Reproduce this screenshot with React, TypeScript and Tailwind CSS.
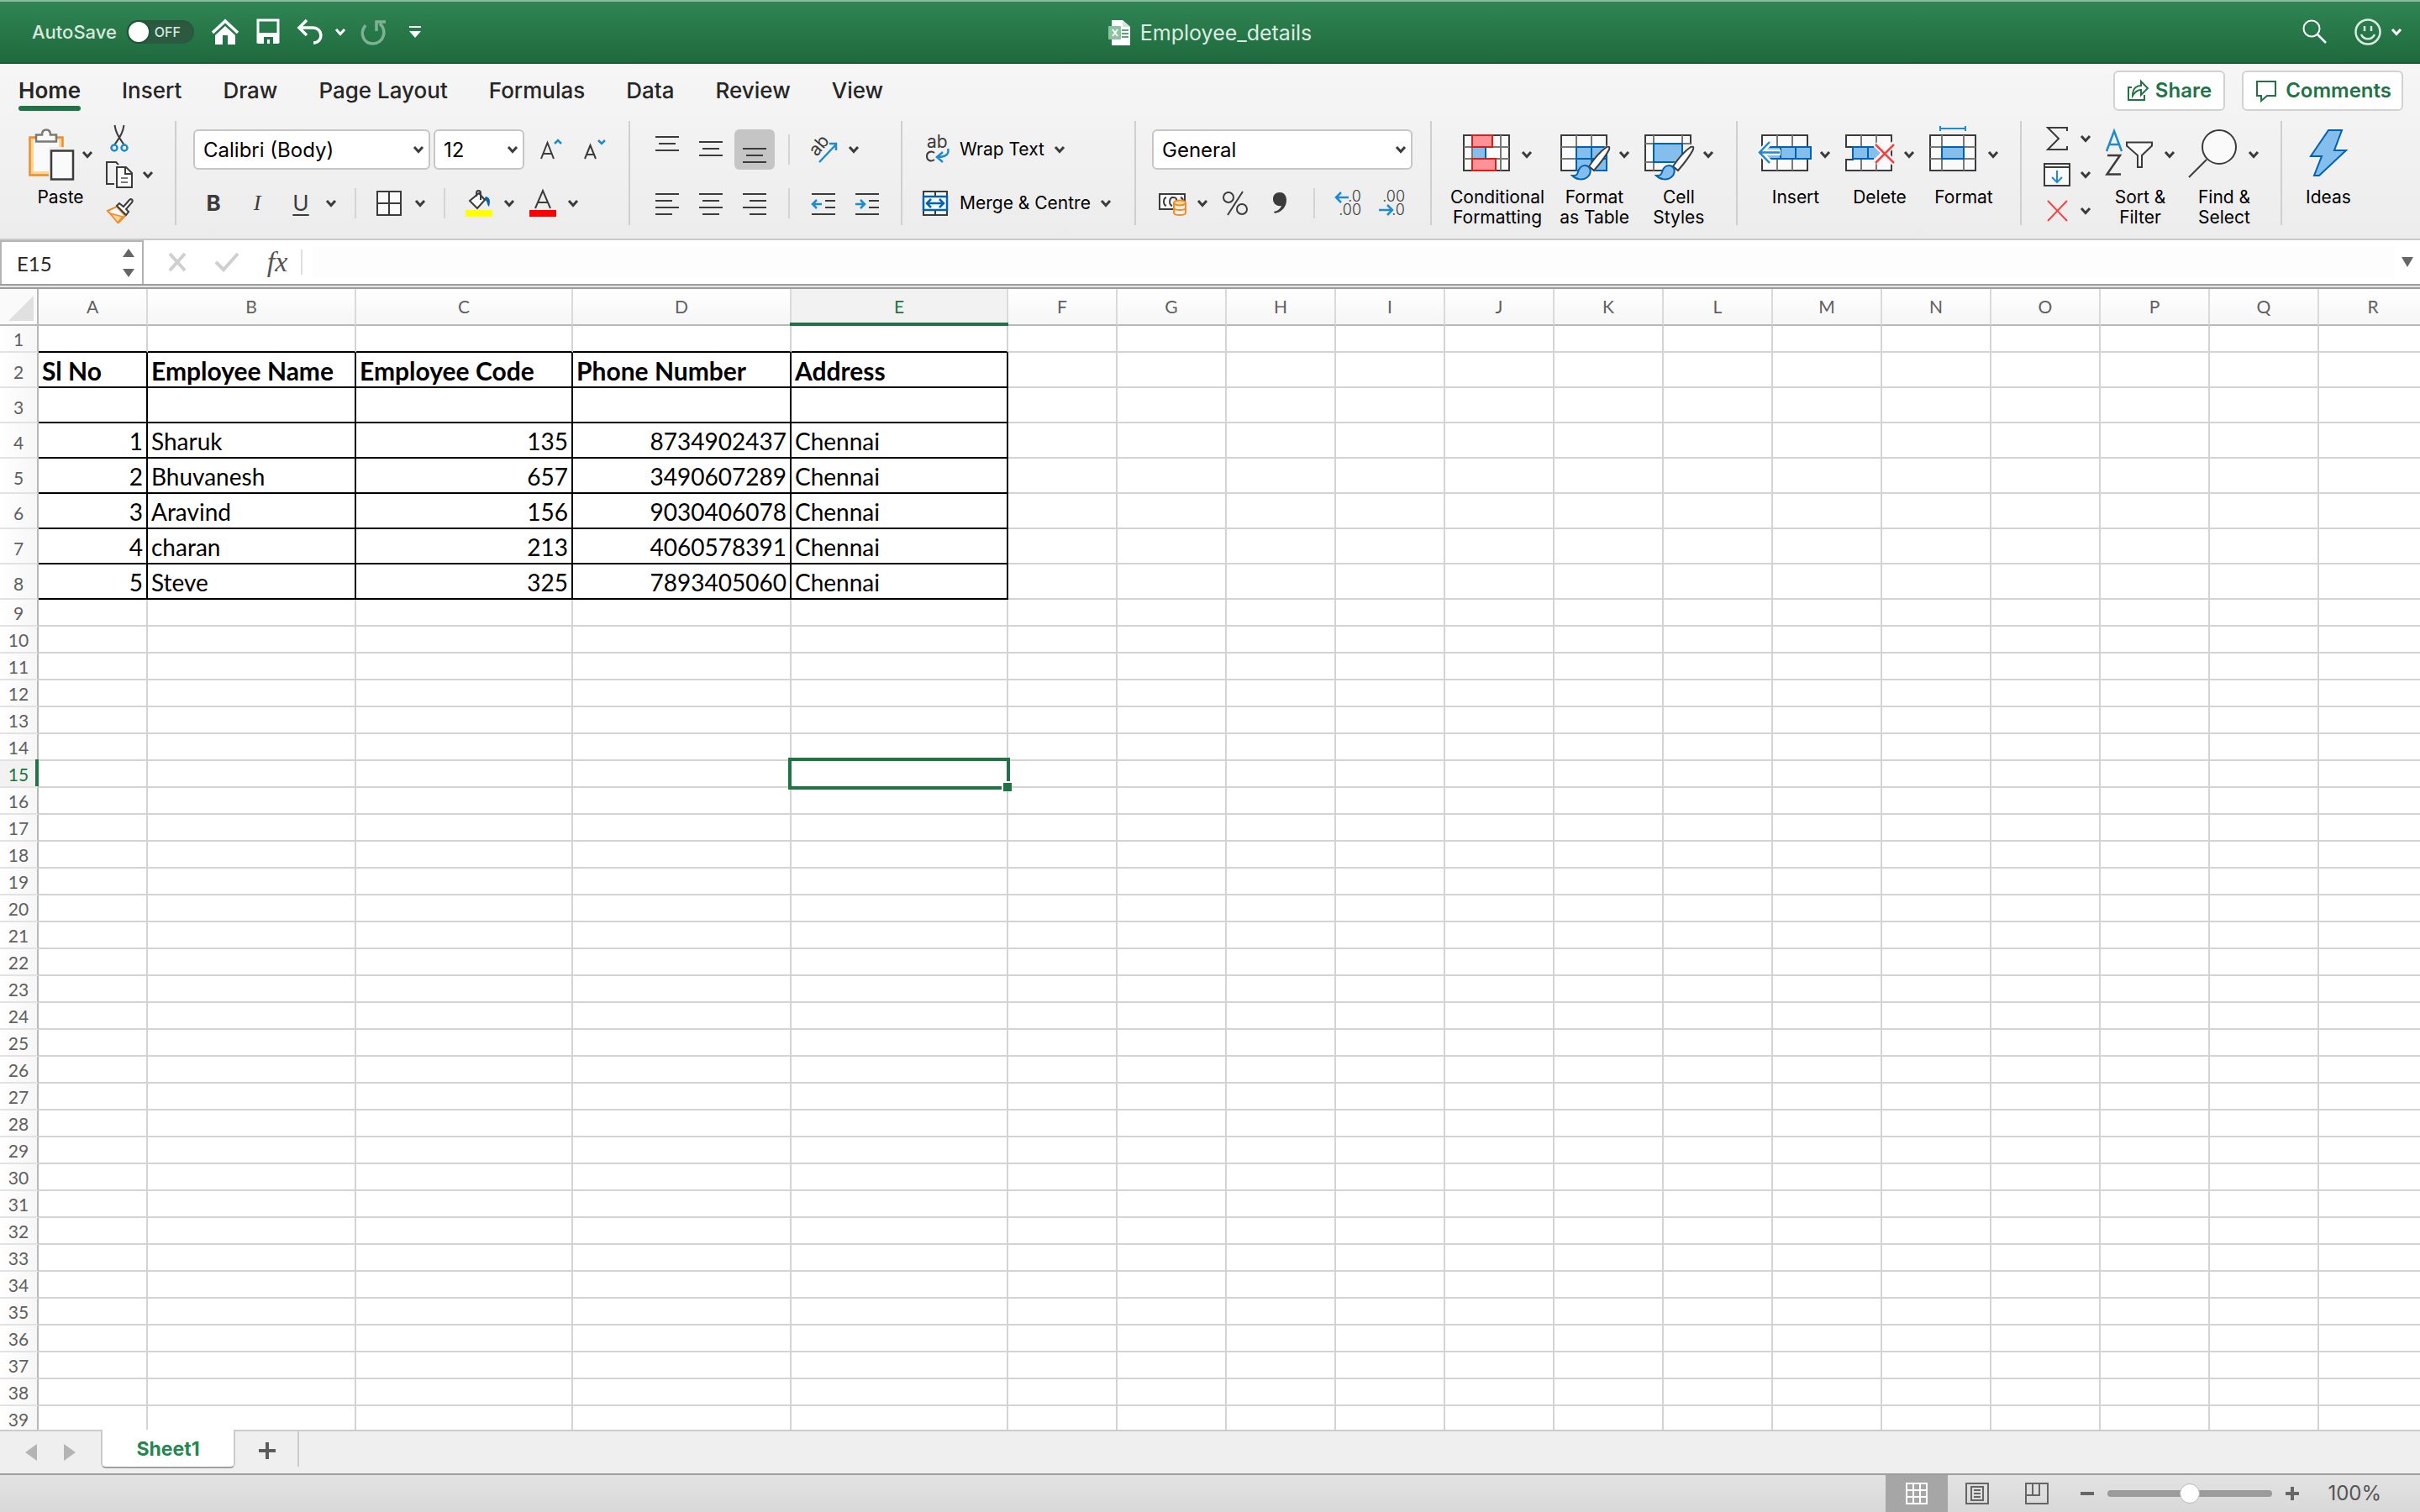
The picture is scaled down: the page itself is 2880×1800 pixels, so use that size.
import React from 'react';
import { clsx } from 'clsx';

const DARK = '#3b3b3b';
const GREY = '#7a7974';
const BLUE = '#1e8bcd';
const DEEP = '#0063b1';
const FILL = '#83beec';

const TABS = ['Home', 'Insert', 'Draw', 'Page Layout', 'Formulas', 'Data', 'Review', 'View'];

const COLUMNS = [
  { name: 'A', width: 130 },
  { name: 'B', width: 248 },
  { name: 'C', width: 258 },
  { name: 'D', width: 260 },
  { name: 'E', width: 258 },
  ...'FGHIJKLMNOPQR'.split('').map(name => ({ name, width: 130 })),
];

const TABLE_WIDTH = COLUMNS.reduce((sum, c) => sum + c.width, 46);

const HEADERS = ['Sl No', 'Employee Name', 'Employee Code', 'Phone Number', 'Address'];

const SHEET: Record<number, (string | number)[]> = {
  2: HEADERS,
  4: [1, 'Sharuk', 135, 8734902437, 'Chennai'],
  5: [2, 'Bhuvanesh', 657, 3490607289, 'Chennai'],
  6: [3, 'Aravind', 156, 9030406078, 'Chennai'],
  7: [4, 'charan', 213, 4060578391, 'Chennai'],
  8: [5, 'Steve', 325, 7893405060, 'Chennai'],
};

const ROWS = Array.from({ length: 39 }, (_, i) => i + 1);

interface IconProps {
  w: number;
  h: number;
  children: React.ReactNode;
}

function Icon({ w, h, children }: IconProps) {
  return (
    <svg width={w} height={h} viewBox={`0 0 ${w} ${h}`} fill="none" className="shrink-0 overflow-visible" aria-hidden="true">
      {children}
    </svg>
  );
}

function Chevron({ color = DARK }: { color?: string }) {
  return (
    <Icon w={12} h={8}>
      <path d="M1 1l5 5.500L11 1" stroke={color} strokeWidth={3} />
    </Icon>
  );
}

function Drop({ label, className }: { label: string; className?: string }) {
  return (
    <button aria-label={label} className={clsx('flex h-9 items-center', className)}>
      <Chevron />
    </button>
  );
}

function Group({ label, className, children }: { label: string; className?: string; children: React.ReactNode }) {
  return (
    <div role="group" aria-label={label} className={clsx('flex h-[124px] shrink-0 border-[#cfcfcf]', className)}>
      {children}
    </div>
  );
}

function Divider({ className }: { className?: string }) {
  return <span className={clsx('h-9 w-0.5 shrink-0 bg-[#d4d4d4]', className)} />;
}

interface BigButtonProps {
  icon: React.ReactNode;
  lines: string[];
  drop?: boolean;
}

function BigButton({ icon, lines, drop = true }: BigButtonProps) {
  return (
    <button className="flex shrink-0 flex-col items-center text-[21px] leading-6 text-black">
      <span className="mb-[9px] flex h-[70px] items-center gap-[10px]">
        {icon}
        {drop && (
          <span className="pt-[10px]">
            <Chevron />
          </span>
        )}
      </span>
      {lines.map(line => (
        <span key={line} className="block whitespace-nowrap">{line}</span>
      ))}
    </button>
  );
}

function PickList({ label, options, className }: { label: string; options: string[]; className?: string }) {
  return (
    <div className={clsx('relative shrink-0', className)}>
      <select
        aria-label={label}
        className="h-12 w-full appearance-none rounded-md border-2 border-[#c6c6c6] bg-white pt-0.5 pl-[10px] text-[24px] leading-8 text-black"
      >
        {options.map(o => <option key={o}>{o}</option>)}
      </select>
      <span className="pointer-events-none absolute top-5 right-2 flex">
        <Chevron />
      </span>
    </div>
  );
}

// Horizontal strokes of the text alignment icons, as [start, end] pairs.
function Lines({ rows, top = 3 }: { rows: [number, number][]; top?: number }) {
  return (
    <Icon w={28} h={28}>
      {rows.map(([a, b], i) => (
        <path key={i} d={`M${a} ${top + i * 8}H${b}`} stroke={DARK} strokeWidth={2} />
      ))}
    </Icon>
  );
}

function PasteIcon() {
  return (
    <Icon w={54} h={70}>
      <path d="M1.500 19.500h39v45h-39z" fill="#f9d98f" stroke="#ee8a30" strokeWidth={2.500} />
      <path d="M6 22h30v38H6z" fill="#fafafa" />
      <path d="M9 24.500v-8h7c0-4 2-6 5-6s5 2 5 6h7v8z" fill="#fafafa" stroke={GREY} strokeWidth={2.500} />
      <path d="M24 31h33v40H24z" fill="#f1f1f1" />
      <path d="M27 35.500h26v34H27z" fill="#fafafa" stroke={DARK} strokeWidth={2.500} />
    </Icon>
  );
}

function ScissorsIcon() {
  return (
    <Icon w={32} h={32}>
      <path d="M10.500 0c1 7 3 12 11 23M21.500 0c-1 7-3 12-11 23" stroke={DARK} strokeWidth={2} />
      <circle cx={10} cy={27} r={3.500} stroke={BLUE} strokeWidth={2.500} />
      <circle cx={22} cy={27} r={3.500} stroke={BLUE} strokeWidth={2.500} />
    </Icon>
  );
}

function CopyIcon() {
  return (
    <Icon w={32} h={32}>
      <path d="M10 27H1V1h11l3 3" stroke={DARK} strokeWidth={2} />
      <path d="M13 7h11l7 7v17H13z" fill="#fafafa" stroke={DARK} strokeWidth={2} />
      <path d="M23 7v8h8" stroke={DARK} strokeWidth={2} />
      <path d="M18 20h8M18 25h8" stroke={GREY} strokeWidth={2} />
    </Icon>
  );
}

function BrushIcon() {
  return (
    <Icon w={32} h={30}>
      <path d="M2 15l11-5 10 11-8 8z" fill="#fafafa" stroke="#ee8a30" strokeWidth={2} />
      <path d="M5 18l15 4-6 7z" fill="#f9d98f" stroke="#ee8a30" strokeWidth={1.500} />
      <path d="M13 9l3-3 5 4 7-8c2-2 5 0 3 3l-7 8 3 3-3 4z" fill="#fafafa" stroke={DARK} strokeWidth={2} />
    </Icon>
  );
}

function GridFrame() {
  return <path d="M1 17h54v42H1z" fill="#fafafa" stroke={DARK} strokeWidth={2} />;
}

function PaintBrush() {
  return (
    <>
      <path d="M29 57L54 30c3-2 7 0 5 4L38 64z" fill="#f6f6f6" />
      <path d="M34 54c6-9 14-18 21-23 3-1 4 0 3 3-4 8-12 18-18 25z" fill="#fafafa" stroke={DARK} strokeWidth={2} />
      <path d="M14 65c7 0 6-2 8-7 3-6 9-6 12-3 3 3 2 9-2 12-5 4-13 3-18-2z" fill={FILL} stroke={DEEP} strokeWidth={2} />
    </>
  );
}

function ConditionalIcon() {
  return (
    <Icon w={60} h={70}>
      <GridFrame />
      <path d="M11 17v42M35 17v42M45 17v42M1 31h54M1 45h54" stroke={GREY} strokeWidth={2} />
      <path d="M28 32h16v12H28z" fill="#fafafa" />
      <path d="M11 17h24v14H11zM11 45h28v14H11z" fill="#ff9197" stroke="#d8201a" strokeWidth={2} />
      <path d="M12 32h15v12H12z" fill={FILL} />
      <path d="M27 31v14" stroke={DEEP} strokeWidth={2} />
    </Icon>
  );
}

function FormatTableIcon() {
  return (
    <Icon w={60} h={70}>
      <GridFrame />
      <path d="M19 17v42M37 17v42M1 31h54M1 45h54" stroke={GREY} strokeWidth={2} />
      <path d="M19 31h36v28H19zM37 31v28M19 45h36" fill={FILL} stroke={DEEP} strokeWidth={2} />
      <PaintBrush />
    </Icon>
  );
}

function CellStylesIcon() {
  return (
    <Icon w={60} h={70}>
      <GridFrame />
      <path d="M11 17v42M45 17v42M1 27h54M1 49h54" stroke={GREY} strokeWidth={2} />
      <path d="M50 28h8v34H30l6-12z" fill="#f1f1f1" />
      <path d="M11 27h34v22H11z" fill={FILL} stroke={DEEP} strokeWidth={2} />
      <PaintBrush />
    </Icon>
  );
}

function InsertCellsIcon() {
  return (
    <Icon w={60} h={70}>
      <GridFrame />
      <path d="M19 17v42M37 17v42" stroke={GREY} strokeWidth={2} />
      <path d="M5 31h54v14H5z" fill={FILL} stroke={DEEP} strokeWidth={2} />
      <path d="M23 31v14M41 31v14" stroke={DEEP} strokeWidth={2} />
      <path d="M11 25L-2 37.500 11 50M-2 37.500h25" stroke="#f6f6f6" strokeWidth={7} />
      <path d="M10 25L-2 37.500 10 50M-2 37.500h24" stroke={BLUE} strokeWidth={2.500} />
    </Icon>
  );
}

function DeleteCellsIcon() {
  return (
    <Icon w={60} h={70}>
      <path d="M1 17h54v42H1V46h8V31H1z" fill="#fafafa" stroke={DARK} strokeWidth={2} />
      <path d="M19 17v14M37 17v14M19 45v14M37 45v14" stroke={GREY} strokeWidth={2} />
      <path d="M9 31h26l7 7-7 7H9z" fill={FILL} />
      <path d="M34 31H9v14h25M27 31v14" stroke={DEEP} strokeWidth={2} />
      <path d="M36 27l22 23M58 27L36 50" stroke="#f6f6f6" strokeWidth={7} />
      <path d="M36 28l22 22M58 28L36 50" stroke="#f04545" strokeWidth={2.500} />
    </Icon>
  );
}

function FormatCellsIcon() {
  return (
    <Icon w={60} h={70}>
      <GridFrame />
      <path d="M15 17v42M41 17v42M1 31h54M1 45h54" stroke={GREY} strokeWidth={2} />
      <path d="M15 31h26v14H15z" fill={FILL} stroke={DEEP} strokeWidth={2} />
      <path d="M13 6v6M43 6v6M13 9h30" stroke={BLUE} strokeWidth={2} />
    </Icon>
  );
}

function SortFilterIcon() {
  return (
    <Icon w={60} h={70}>
      <path d="M1 36l9-24 9 24M4 28h12" stroke={BLUE} strokeWidth={2.500} />
      <path d="M2 41h15L1.500 63.500H18" stroke={DARK} strokeWidth={2.500} />
      <path d="M25 25.500h30v4L43 41v14h-5V41L25 29.500z" fill="#fafafa" stroke={DARK} strokeWidth={2} />
    </Icon>
  );
}

function FindIcon() {
  return (
    <Icon w={60} h={70}>
      <circle cx={35} cy={31} r={20} fill="#fafafa" stroke={DARK} strokeWidth={2} />
      <path d="M20 46L-1 67" stroke={DARK} strokeWidth={2} />
    </Icon>
  );
}

function IdeasIcon() {
  return (
    <Icon w={44} h={70}>
      <path d="M22 11h16L29 35h14L11 65H5l9-23H1z" fill={FILL} stroke={DEEP} strokeWidth={2} />
    </Icon>
  );
}

function DecimalIcon({ increase }: { increase?: boolean }) {
  return (
    <Icon w={32} h={32}>
      <text x={31} y={14} textAnchor="end" fontSize={18} fontWeight={300} fill={DARK}>{increase ? '.0' : '.00'}</text>
      <text x={31} y={30} textAnchor="end" fontSize={18} fontWeight={300} fill={DARK}>{increase ? '.00' : '.0'}</text>
      {increase
        ? <path d="M16 9H1M7 3L1 9l6 6" stroke={BLUE} strokeWidth={2.500} />
        : <path d="M0 24h16M10 18l6 6-6 6" stroke={BLUE} strokeWidth={2.500} />}
    </Icon>
  );
}

function TitleBar() {
  return (
    <header className="grid h-[76px] shrink-0 grid-cols-[1fr_auto_1fr] items-center border-t-2 border-b-2 border-t-[#8dbb9f] border-b-[#1a5733] bg-linear-to-b from-[#308553] to-[#1e6a3e] text-white">
      <div className="flex items-center pl-[38px]">
        <label htmlFor="autosave" className="text-[22px] leading-7 font-medium text-[#d9e8df]">AutoSave</label>
        <span className="relative ml-3 flex">
          <input
            id="autosave"
            type="checkbox"
            role="switch"
            className="h-7 w-20 appearance-none rounded-full bg-[#2b5a40] shadow-inner before:block before:size-7 before:rounded-full before:border-2 before:border-[#205236] before:bg-white"
          />
          <span className="pointer-events-none absolute top-0 right-4 text-[16px] leading-7 font-medium text-[#d9e8df]">OFF</span>
        </span>
        <button aria-label="Home" className="ml-5">
          <Icon w={34} h={32}>
            <path d="M2 17L17 3l15 14" stroke="#fff" strokeWidth={3.500} />
            <path d="M5 20L17 9l12 11v11h-9V20h-6v11H5z" fill="#fff" />
          </Icon>
        </button>
        <button aria-label="Save" className="ml-5">
          <Icon w={28} h={32}>
            <path d="M2 2h24v26H2z" stroke="#fff" strokeWidth={3} />
            <path d="M2 17h24v13H2z" fill="#fff" />
            <path d="M9 22h11v8H16v-5h-3v5H9z" fill="#23744a" />
          </Icon>
        </button>
        <button aria-label="Undo" className="ml-5">
          <Icon w={32} h={32}>
            <path d="M12 2L3 11l9 9M3 11h16c13 0 13 18 1 18" stroke="#fff" strokeWidth={3.500} />
          </Icon>
        </button>
        <button aria-label="Undo history" className="ml-[14px]"><Chevron color="#fff" /></button>
        <button aria-label="Redo" className="ml-[18px]">
          <Icon w={32} h={32}>
            <path d="M6 8c-8 10-2 22 9 22s18-14 8-24M30 4H19v11" stroke="#7fb195" strokeWidth={3.500} />
          </Icon>
        </button>
        <button aria-label="Customise toolbar" className="ml-[26px]">
          <Icon w={14} h={16}>
            <path d="M0 2h14" stroke="#fff" strokeWidth={2} />
            <path d="M0 7h14l-7 8z" fill="#fff" />
          </Icon>
        </button>
      </div>

      <h1 className="flex items-center gap-3 pt-0.5 text-[25px] leading-8 text-[#dcebe2]">
        <Icon w={26} h={30}>
          <path d="M4 0h13l9 8v22H4z" fill="#fff" />
          <path d="M17 0l9 8h-9z" fill="#d5e3da" />
          <path d="M16 12h8M16 16h8M16 20h8" stroke="#5f9f7c" strokeWidth={2} />
          <rect y={7} width={15} height={16} rx={1} fill="#8bc2a2" />
          <path d="M5 11l6 8M11 11l-6 8" stroke="#fff" strokeWidth={2} />
        </Icon>
        Employee_details
      </h1>

      <div className="flex items-center justify-end pr-[22px]">
        <button aria-label="Search">
          <Icon w={30} h={30}>
            <circle cx={11} cy={11} r={9.500} stroke="#fff" strokeWidth={2} />
            <path d="M18 18l10 10" stroke="#fff" strokeWidth={2.500} />
          </Icon>
        </button>
        <button aria-label="Feedback" className="ml-8">
          <Icon w={32} h={32}>
            <circle cx={16} cy={16} r={14.500} stroke="#dcebe2" strokeWidth={2.500} />
            <path d="M12 9v6M20 9v6M8 19c3 7 13 7 16 0" stroke="#dcebe2" strokeWidth={2.500} />
          </Icon>
        </button>
        <button aria-label="Feedback options" className="ml-3"><Chevron color="#fff" /></button>
      </div>
    </header>
  );
}

function RibbonTabs() {
  return (
    <div className="flex h-[68px] items-start justify-between pr-5 pl-[22px]">
      <nav className="flex gap-[49px] pt-[14px]">
        {TABS.map(tab => (
          <button
            key={tab}
            className={clsx('flex flex-col text-[26px] leading-9 text-[#262626]', tab === 'Home' ? 'font-semibold' : 'font-medium')}
          >
            {tab}
            {tab === 'Home' && <span className="block h-1.5 w-full rounded-full bg-[#217346]" />}
          </button>
        ))}
      </nav>
      <div className="flex gap-5 pt-2 text-[24px] leading-8 font-semibold text-[#217346]">
        <button className="flex h-12 items-center gap-2 rounded-md border-2 border-[#d2d2d2] bg-white px-[14px]">
          <Icon w={26} h={26}>
            <path d="M6 9H2v15h19v-6" stroke="#217346" strokeWidth={2} />
            <path d="M7 19c0-8 4-12 10-12V2l8 8-8 8v-6c-4 0-7 2-10 7z" stroke="#217346" strokeWidth={2} />
          </Icon>
          Share
        </button>
        <button className="flex h-12 items-center gap-2 rounded-md border-2 border-[#d2d2d2] bg-white px-3">
          <Icon w={30} h={26}>
            <path d="M4 2h22v17H16l-7 6v-6H4z" stroke="#217346" strokeWidth={2} />
          </Icon>
          Comments
        </button>
      </div>
    </div>
  );
}

function FontGroup() {
  return (
    <Group label="Font" className="w-[540px] flex-col border-r-2 pt-[10px] pl-5">
      <div className="flex">
        <PickList label="Font name" options={['Calibri (Body)']} className="w-[282px]" />
        <PickList label="Font size" options={['12']} className="ml-1 w-[108px]" />
        <button aria-label="Increase font size" className="ml-[18px]">
          <Icon w={28} h={28}>
            <path d="M2 25l7.500-19L17 25M5 19h9" stroke={DARK} strokeWidth={2} />
            <path d="M18 7l4-4 4 4" stroke={BLUE} strokeWidth={2.500} />
          </Icon>
        </button>
        <button aria-label="Decrease font size" className="ml-6">
          <Icon w={28} h={28}>
            <path d="M2 25L8.500 9 15 25M4 20h9" stroke={DARK} strokeWidth={2} />
            <path d="M18 3l4 4 4-4" stroke={BLUE} strokeWidth={2.500} />
          </Icon>
        </button>
      </div>
      <div className="mt-[22px] flex h-9 items-center text-[26px] leading-8 text-[#3b3b3b]">
        <button aria-label="Bold" className="ml-[10px] w-7 font-bold">B</button>
        <button aria-label="Italic" className="ml-6 w-7 font-['Liberation_Serif',serif] italic">I</button>
        <button aria-label="Underline" className="ml-6 w-7 underline underline-offset-4">U</button>
        <Drop label="Underline style" className="ml-4" />
        <Divider className="ml-[22px]" />
        <button aria-label="Borders" className="ml-6">
          <Icon w={30} h={30}>
            <path d="M1 1h28v28H1zM15 1v28M1 15h28" fill="#fafafa" stroke={DARK} strokeWidth={2} />
          </Icon>
        </button>
        <Drop label="Border style" className="ml-4" />
        <Divider className="ml-[22px]" />
        <button aria-label="Fill colour" className="ml-6">
          <Icon w={32} h={32}>
            <path d="M0 24h32v8H0z" fill="#ffff00" />
            <path d="M24 8c5 1 6 5 4 12-3-2-1-7-6-9z" fill={DEEP} />
            <path d="M5 13L16 4l7 8-9 10z" fill="#fafafa" stroke={DARK} strokeWidth={2} />
            <path d="M18 12V4c0-4-5-4-5 0v4" stroke={DARK} strokeWidth={2} />
          </Icon>
        </button>
        <Drop label="Fill palette" className="ml-[14px]" />
        <button aria-label="Font colour" className="ml-[18px]">
          <Icon w={32} h={32}>
            <path d="M0 24h32v8H0z" fill="#ff0000" />
            <path d="M7 22L16 1l9 21M10 15h12" stroke={DARK} strokeWidth={2} />
          </Icon>
        </button>
        <Drop label="Font palette" className="ml-[14px]" />
      </div>
    </Group>
  );
}

function AlignGroup() {
  const button = 'flex h-12 w-12 items-center justify-center rounded-md';
  return (
    <Group label="Alignment" className="w-[324px] flex-col border-r-2 pt-[10px] pl-5">
      <div className="flex items-center gap-1">
        <button aria-label="Top align" className={button}><Lines top={-1} rows={[[0, 28], [4, 24], [0, 28]]} /></button>
        <button aria-label="Middle align" className={button}><Lines top={5} rows={[[0, 28], [4, 24], [0, 28]]} /></button>
        <button aria-label="Bottom align" className={clsx(button, 'bg-[#c5c5c5]')}><Lines top={13} rows={[[0, 28], [4, 24], [0, 28]]} /></button>
        <Divider className="ml-3" />
        <button aria-label="Orientation" className="ml-5">
          <Icon w={32} h={32}>
            <text x={8} y={25} fontSize={21} fill={DARK} transform="rotate(-50 8 25)">ab</text>
            <path d="M11 31L31 10M23 9h8v8" stroke={BLUE} strokeWidth={2.500} />
          </Icon>
        </button>
        <Drop label="Orientation options" className="ml-[10px]" />
      </div>
      <div className="mt-[22px] flex h-9 items-center gap-1">
        <button aria-label="Align left" className={button}><Lines rows={[[0, 28], [0, 20], [0, 28], [0, 20]]} /></button>
        <button aria-label="Centre" className={button}><Lines rows={[[0, 28], [4, 24], [0, 28], [4, 24]]} /></button>
        <button aria-label="Align right" className={button}><Lines rows={[[0, 28], [8, 28], [0, 28], [8, 28]]} /></button>
        <Divider className="ml-3" />
        <button aria-label="Decrease indent" className={clsx(button, 'ml-3')}>
          <Icon w={28} h={28}>
            <path d="M0 3h28M16 11h12M16 19h12M0 27h28" stroke={DARK} strokeWidth={2} />
            <path d="M12 15H1M6 10l-5 5 5 5" stroke={BLUE} strokeWidth={2.500} />
          </Icon>
        </button>
        <button aria-label="Increase indent" className={button}>
          <Icon w={28} h={28}>
            <path d="M0 3h28M16 11h12M16 19h12M0 27h28" stroke={DARK} strokeWidth={2} />
            <path d="M0 15h11M6 10l5 5-5 5" stroke={BLUE} strokeWidth={2.500} />
          </Icon>
        </button>
      </div>
    </Group>
  );
}

function WrapGroup() {
  return (
    <Group label="Wrap and merge" className="w-[278px] flex-col border-r-2 pt-[10px] pl-6 text-[21px] leading-7 text-black">
      <button className="flex h-12 items-center gap-3">
        <Icon w={32} h={32}>
          <text x={5} y={14} fontSize={21} fill={DARK}>ab</text>
          <path d="M14 20c-4-3-9-1-9 4s5 7 9 4" stroke={DARK} strokeWidth={2} />
          <path d="M30 15c2 6-2 10-12 10M24 19l-7 6 7 6" stroke={BLUE} strokeWidth={2.500} />
        </Icon>
        Wrap Text
        <Chevron />
      </button>
      <button className="mt-[22px] flex h-9 items-center gap-3">
        <Icon w={32} h={30}>
          <path d="M1 1h28v28H1zM15 1v28" fill="#fafafa" stroke={DARK} strokeWidth={2} />
          <path d="M1 7h28v16H1z" fill="#fafafa" stroke={DEEP} strokeWidth={2.500} />
          <path d="M6 15h18M10 10l-5 5 5 5M20 10l5 5-5 5" stroke={DEEP} strokeWidth={2.500} />
        </Icon>
        Merge &amp; Centre
        <Chevron />
      </button>
    </Group>
  );
}

function NumberGroup() {
  return (
    <Group label="Number" className="w-[352px] flex-col border-r-2 pt-[10px] pl-[19px]">
      <PickList label="Number format" options={['General']} className="w-[310px]" />
      <div className="mt-[22px] flex h-9 items-center">
        <button aria-label="Accounting format" className="ml-2">
          <Icon w={32} h={28}>
            <path d="M1 3h30v18H1z" fill="#fafafa" stroke={DARK} strokeWidth={2} />
            <path d="M9 7c-4 1-4 9 0 10M16 17c-4-1-4-10 1-10s4 3 4 5M26 7c3 1 3 3 3 5" stroke={DARK} strokeWidth={2} />
            <path d="M17 12h15v16H17z" fill="#fdf3e6" />
            <ellipse cx={25} cy={13.500} rx={7} ry={3} fill="#f9d98f" stroke="#ee8a30" strokeWidth={2} />
            <path d="M18 14v11c0 4 14 4 14 0V14M18 19c0 4 14 4 14 0" stroke="#ee8a30" strokeWidth={2} />
          </Icon>
        </button>
        <Drop label="Currency" className="ml-[14px]" />
        <button aria-label="Percent style" className="ml-[18px]">
          <Icon w={30} h={30}>
            <circle cx={7} cy={8} r={6} stroke={DARK} strokeWidth={2} />
            <circle cx={23} cy={22} r={6} stroke={DARK} strokeWidth={2} />
            <path d="M24 1L6 29" stroke={DARK} strokeWidth={2} />
          </Icon>
        </button>
        <button aria-label="Comma style" className="ml-[30px]">
          <Icon w={16} h={26}>
            <path d="M8 0c5 0 8 4 8 9 0 8-5 14-14 16l-1-2c5-1 8-4 9-7-6 1-10-3-10-8 0-5 3-8 8-8z" fill={DARK} />
          </Icon>
        </button>
        <Divider className="ml-8" />
        <button aria-label="Increase decimal" className="ml-6"><DecimalIcon increase /></button>
        <button aria-label="Decrease decimal" className="ml-5"><DecimalIcon /></button>
      </div>
    </Group>
  );
}

function Ribbon() {
  return (
    <section aria-label="Ribbon" className="h-[210px] shrink-0 overflow-hidden border-b-2 border-[#c9c9c9] bg-linear-to-b from-[#f6f6f6] to-[#ececec]">
      <RibbonTabs />
      <div className="flex">
        <Group label="Clipboard" className="w-[210px] gap-4 border-r-2 pl-[34px]">
          <BigButton icon={<PasteIcon />} lines={['Paste']} />
          <div className="flex flex-col gap-2 pt-1">
            <button aria-label="Cut" className="flex h-9 items-center"><ScissorsIcon /></button>
            <button aria-label="Copy" className="flex h-9 items-center gap-3"><CopyIcon /><Chevron /></button>
            <button aria-label="Format painter" className="flex h-9 items-center"><BrushIcon /></button>
          </div>
        </Group>
        <FontGroup />
        <AlignGroup />
        <WrapGroup />
        <NumberGroup />
        <Group label="Styles" className="w-[364px] gap-[18px] border-r-2 pl-[22px]">
          <BigButton icon={<ConditionalIcon />} lines={['Conditional', 'Formatting']} />
          <BigButton icon={<FormatTableIcon />} lines={['Format', 'as Table']} />
          <BigButton icon={<CellStylesIcon />} lines={['Cell', 'Styles']} />
        </Group>
        <Group label="Cells" className="w-[338px] gap-[18px] border-r-2 pl-7">
          <BigButton icon={<InsertCellsIcon />} lines={['Insert']} />
          <BigButton icon={<DeleteCellsIcon />} lines={['Delete']} />
          <BigButton icon={<FormatCellsIcon />} lines={['Format']} />
        </Group>
        <Group label="Editing" className="w-[310px] gap-[18px] border-r-2 pl-[26px]">
          <div className="flex flex-col gap-2 pt-1">
            <button aria-label="AutoSum" className="flex h-9 items-center gap-3">
              <Icon w={32} h={30}>
                <path d="M28 6V2H5l13 13L5 28h23v-4" stroke={DARK} strokeWidth={2} />
              </Icon>
              <Chevron />
            </button>
            <button aria-label="Fill" className="flex h-9 items-center gap-3">
              <Icon w={32} h={28}>
                <path d="M1 1h30v26H1zM1 5h30" fill="#fafafa" stroke={DARK} strokeWidth={2} />
                <path d="M16 9v14M10 17l6 6 6-6" stroke={BLUE} strokeWidth={2} />
              </Icon>
              <Chevron />
            </button>
            <button aria-label="Clear" className="flex h-9 items-center gap-3">
              <Icon w={32} h={24}>
                <path d="M5 0l23 24M28 0L5 24" stroke="#f04545" strokeWidth={2} />
              </Icon>
              <Chevron />
            </button>
          </div>
          <BigButton icon={<SortFilterIcon />} lines={['Sort &', 'Filter']} />
          <BigButton icon={<FindIcon />} lines={['Find &', 'Select']} />
        </Group>
        <Group label="Ideas" className="pl-7">
          <BigButton icon={<IdeasIcon />} lines={['Ideas']} drop={false} />
        </Group>
      </div>
    </section>
  );
}

function FormulaBar() {
  return (
    <div className="flex h-[54px] shrink-0 items-center border-b-2 border-[#9c9c9c] bg-white">
      <div className="flex h-full w-[171px] shrink-0 items-center justify-between border-2 border-b-0 border-[#b4b4b4] pr-[9px]">
        <input aria-label="Name box" defaultValue="E15" className="w-28 bg-transparent pt-0.5 pl-[18px] font-['Lato',sans-serif] text-[24px] leading-8 text-[#262626] outline-none" />
        <Icon w={14} h={34}>
          <path d="M0 10L7 0l7 10zM0 24h14L7 34z" fill="#666" />
        </Icon>
      </div>
      <button aria-label="Cancel" className="ml-[29px]">
        <Icon w={22} h={22}>
          <path d="M2 1l18 20M20 1L2 21" stroke="#cfcfcf" strokeWidth={4} />
        </Icon>
      </button>
      <button aria-label="Enter" className="ml-[34px]">
        <Icon w={28} h={22}>
          <path d="M1 11l9 9L27 1" stroke="#cfcfcf" strokeWidth={4} />
        </Icon>
      </button>
      <button aria-label="Insert function" className="ml-[30px] w-8 font-['Liberation_Serif',serif] text-[34px] leading-9 text-[#555] italic">fx</button>
      <span className="ml-3 h-[30px] w-0.5 bg-[#dedede]" />
      <input aria-label="Formula" className="ml-3 h-[38px] flex-1 bg-[#fdfdfd] text-[24px] outline-none" />
      <button aria-label="Expand formula bar" className="mr-2 ml-2">
        <Icon w={14} h={12}>
          <path d="M0 0h14L7 12z" fill="#666" />
        </Icon>
      </button>
    </div>
  );
}

function Cell({ row, col }: { row: number; col: number }) {
  const value = SHEET[row]?.[col];
  const inTable = col < 5 && row >= 2 && row <= 8;
  const selected = row === 15 && col === 4;
  return (
    <td
      className={clsx(
        'border-r-2 border-b-2 px-1 py-0 align-bottom leading-[38px] whitespace-nowrap text-black',
        inTable ? 'border-black' : 'border-[#d4d4d4]',
        row === 1 && col < 5 && 'border-b-black',
        row === 2 ? 'text-[30px] font-bold' : 'text-[28px]',
        typeof value === 'number' && 'text-right',
        selected && 'relative',
      )}
    >
      {value}
      {selected && (
        <span className="absolute -inset-1 border-4 border-[#217346]">
          <span className="absolute -right-[6px] -bottom-[6px] size-3 border-t-2 border-l-2 border-white bg-[#217346]" />
        </span>
      )}
    </td>
  );
}

function Grid() {
  return (
    <main className="mt-0.5 min-h-0 flex-1 overflow-hidden border-t-2 border-[#9c9c9c] bg-white font-['Lato',sans-serif]">
      <table className="table-fixed border-separate border-spacing-0" style={{ width: TABLE_WIDTH }}>
        <colgroup>
          <col className="w-[46px]" />
          {COLUMNS.map(c => <col key={c.name} style={{ width: c.width }} />)}
        </colgroup>
        <thead>
          <tr className="h-11 text-[21px] leading-[42px] text-[#606060]">
            <th aria-label="Select all" className="border-r-2 border-b-2 border-[#b8b8b8] bg-[#fafafa] p-0">
              <svg viewBox="0 0 44 42" className="block h-[42px] w-11" aria-hidden="true">
                <path d="M40 8v30H10z" fill="#e0e0e0" />
              </svg>
            </th>
            {COLUMNS.map(({ name }) => (
              <th
                key={name}
                scope="col"
                className={clsx(
                  'relative border-r-2 border-b-2 border-r-[#dadada] border-b-[#b8b8b8] p-0 font-normal',
                  name === 'E' ? 'bg-[#f2f2f2] text-[#217346]' : 'bg-linear-to-b from-white to-[#f6f6f6]',
                )}
              >
                {name}
                {name === 'E' && <span className="absolute -right-0.5 -bottom-0.5 -left-0.5 h-1 bg-[#217346]" />}
              </th>
            ))}
          </tr>
        </thead>
        <tbody>
          {ROWS.map(row => {
            const tall = row >= 2 && row <= 8;
            return (
              <tr key={row} className={tall ? 'h-[42px]' : 'h-8'}>
                <th
                  scope="row"
                  className={clsx(
                    'relative border-r-2 border-b-2 border-r-[#b8b8b8] border-b-[#e2e2e2] p-0 align-bottom text-[21px] leading-7 font-normal',
                    tall && 'pb-[3px]',
                    row === 15 ? 'bg-[#f2f2f2] text-[#217346]' : 'bg-linear-to-r from-white to-[#f6f6f6] text-[#606060]',
                  )}
                >
                  {row}
                  {row === 15 && <span className="absolute -top-0.5 -right-0.5 bottom-0 w-1 bg-[#217346]" />}
                </th>
                {COLUMNS.map((c, i) => <Cell key={c.name} row={row} col={i} />)}
              </tr>
            );
          })}
        </tbody>
      </table>
    </main>
  );
}

function SheetTabs() {
  return (
    <nav aria-label="Sheets" className="relative flex h-[52px] shrink-0 items-start border-t-2 border-[#cbcbcb] bg-[#efefef]">
      <button aria-label="Previous sheet" className="mt-[15px] ml-[30px]">
        <Icon w={14} h={20}><path d="M14 0v20L0 10z" fill="#b4b4b4" /></Icon>
      </button>
      <button aria-label="Next sheet" className="mt-[15px] ml-8">
        <Icon w={14} h={20}><path d="M0 0v20l14-10z" fill="#b4b4b4" /></Icon>
      </button>
      <button className="-mt-0.5 ml-[30px] h-[46px] w-40 rounded-b-md border-2 border-t-0 border-[#cbcbcb] border-b-[#a0a0a0] bg-white pt-0.5 text-[23px] leading-8 font-bold text-[#23874f]">
        Sheet1
      </button>
      <button aria-label="Add sheet" className="mt-[13px] ml-7">
        <Icon w={20} h={20}><path d="M10 0v20M0 10h20" stroke="#5c5c5c" strokeWidth={4} /></Icon>
      </button>
      <span className="ml-[26px] h-[42px] w-0.5 bg-[#cbcbcb]" />
    </nav>
  );
}

function StatusBar() {
  return (
    <footer className="flex h-[46px] shrink-0 items-center justify-end border-t-2 border-[#9e9e9e] bg-linear-to-b from-[#e3e3e3] to-[#d8d8d8] pr-[46px]">
      <button aria-label="Normal view" className="flex h-full w-[74px] items-center justify-center bg-[#a6a6a6]">
        <Icon w={26} h={26}>
          <path d="M1 1h24v24H1zM9 1v24M17 1v24M1 9h24M1 17h24" stroke="#fff" strokeWidth={2} />
        </Icon>
      </button>
      <button aria-label="Page layout view" className="ml-[21px]">
        <Icon w={28} h={26}>
          <path d="M1 1h26v24H1zM7 5h14v16H7z" stroke="#666" strokeWidth={2} />
          <path d="M10 9h8M10 13h8M10 17h8" stroke="#666" strokeWidth={2} />
        </Icon>
      </button>
      <button aria-label="Page break preview" className="ml-[43px]">
        <Icon w={28} h={26}>
          <path d="M1 1h26v24H1zM9 1v14M17 1v14M1 15h17" stroke="#666" strokeWidth={2} />
        </Icon>
      </button>
      <button aria-label="Zoom out" className="ml-[38px]">
        <Icon w={16} h={16}><path d="M0 8h16" stroke="#666" strokeWidth={4} /></Icon>
      </button>
      <input
        type="range"
        aria-label="Zoom"
        defaultValue={50}
        className="ml-4 h-2 w-[196px] appearance-none rounded-full bg-[#9b9b9b] [&::-webkit-slider-thumb]:size-6 [&::-webkit-slider-thumb]:appearance-none [&::-webkit-slider-thumb]:rounded-full [&::-webkit-slider-thumb]:border [&::-webkit-slider-thumb]:border-[#b5b5b5] [&::-webkit-slider-thumb]:bg-white"
      />
      <button aria-label="Zoom in" className="ml-4">
        <Icon w={16} h={16}><path d="M0 8h16M8 0v16" stroke="#666" strokeWidth={4} /></Icon>
      </button>
      <span className="ml-[34px] text-[24px] leading-8 text-[#555]">100%</span>
    </footer>
  );
}

export default function App() {
  return (
    <div className="flex h-screen flex-col overflow-hidden bg-[#e6e6e6] font-['Inter',sans-serif]">
      <TitleBar />
      <Ribbon />
      <FormulaBar />
      <Grid />
      <SheetTabs />
      <StatusBar />
    </div>
  );
}
